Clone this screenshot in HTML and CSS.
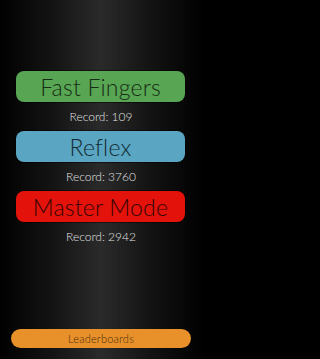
FILE: index.html
```html
<!DOCTYPE html>
<html>
<head>
<meta charset="utf-8">
<link rel="stylesheet" href="styles.css">
</head>
<body>
<div class="screen">
  <div class="modes">
    <div class="mode green">Fast Fingers</div>
    <div class="record">Record: 109</div>
    <div class="mode blue">Reflex</div>
    <div class="record">Record: 3760</div>
    <div class="mode red">Master Mode</div>
    <div class="record">Record: 2942</div>
  </div>
  <div class="leader">Leaderboards</div>
</div>
</body>
</html>
```
FILE: styles.css
```css
html, body {
  margin: 0;
  padding: 0;
  width: 202px;
  height: 359px;
  overflow: hidden;
}
body {
  background: #000;
  font-family: Lato, "Open Sans", sans-serif;
}
.screen {
  height: 359px;
  display: flex;
  flex-direction: column;
  box-sizing: border-box;
  padding: 71px 0 11px;
  background:
    repeating-linear-gradient(90deg, rgba(255,255,255,0.008) 0 1px, rgba(0,0,0,0.015) 1px 3px),
    linear-gradient(90deg, #000 0%, #121212 25%, #2a2a2a 50%, #121212 75%, #000 100%);
}
.modes {
  display: flex;
  flex-direction: column;
}
.mode {
  margin: 0 17px 0 16px;
  height: 31px;
  border-radius: 8px;
  display: flex;
  align-items: center;
  justify-content: center;
  font-size: 23px;
  font-weight: 300;
  letter-spacing: 0.2px;
  box-shadow: 0 0 0 1px rgba(0,0,0,0.5);
}
.green { background: #58a553; color: #162c14; }
.blue { background: #5aa5c1; color: #122a33; }
.red { background: #e3130c; color: #330503; }
.record {
  height: 29px;
  line-height: 29px;
  text-align: center;
  color: #e2e2e2;
  font-size: 12px;
  font-weight: 300;
}
.leader {
  margin: auto 11px 0 11px;
  height: 19px;
  border-radius: 10px;
  background: #e8912a;
  color: #4b2e0c;
  font-size: 11px;
  font-weight: 300;
  display: flex;
  align-items: center;
  justify-content: center;
  letter-spacing: 0.2px;
}
```
